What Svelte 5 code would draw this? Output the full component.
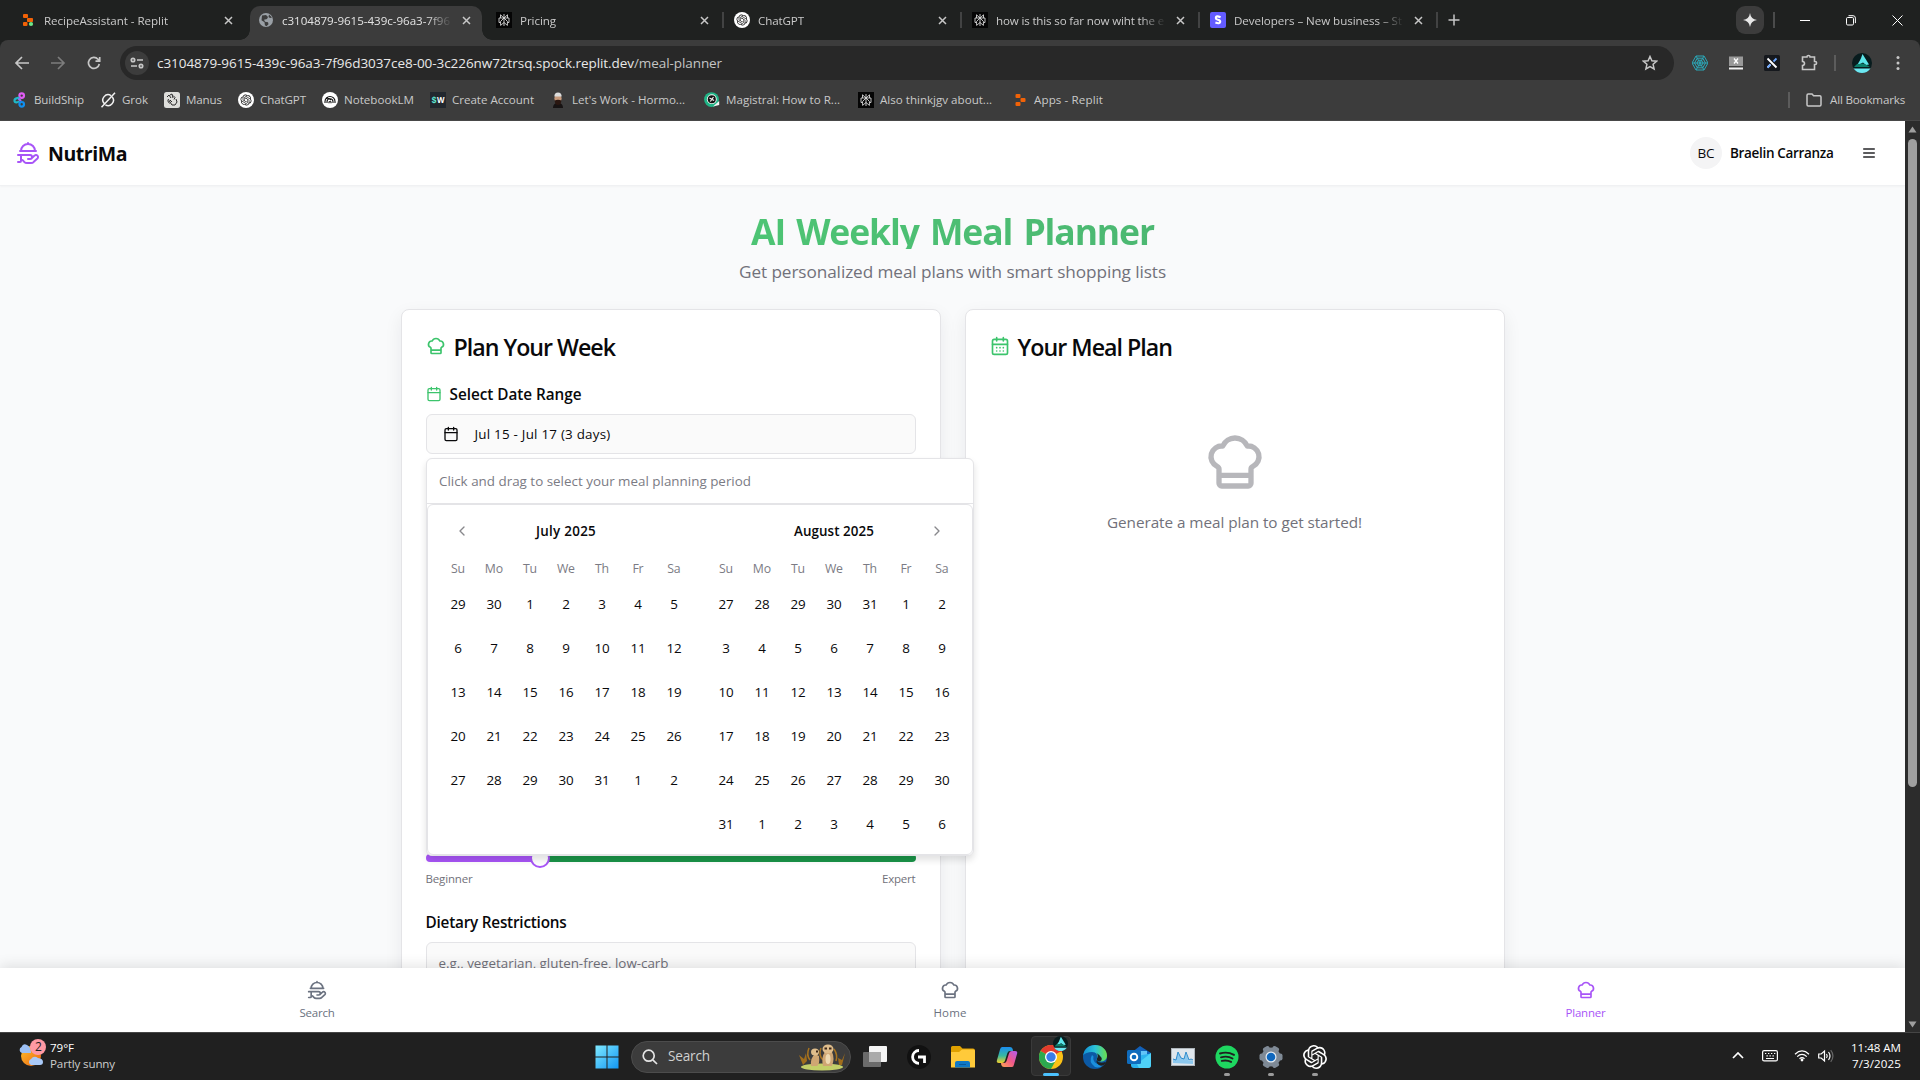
<script>
  function fit(node, width) {
    const range = document.createRange();
    range.selectNodeContents(node);
    const natural = range.getBoundingClientRect().width;
    const count = node.textContent.length;
    node.style.letterSpacing = (width - natural) / count + 'px';
  }

  const tabs = [
    { icon: 'replit', title: 'RecipeAssistant - Replit', w: 124 },
    { icon: 'globe', title: 'c3104879-9615-439c-96a3-7f96', w: 168, active: true },
    { icon: 'perplexity', title: 'Pricing', w: 36 },
    { icon: 'gpt', title: 'ChatGPT', w: 46 },
    { icon: 'perplexity', title: 'how is this so far now wiht the e', w: 168 },
    { icon: 'stripe', title: 'Developers – New business – St', w: 168 }
  ];

  const bookmarks = [
    { icon: 'buildship', title: 'BuildShip', w: 50 },
    { icon: 'grok', title: 'Grok', w: 26 },
    { icon: 'manus', title: 'Manus', w: 36 },
    { icon: 'gpt', title: 'ChatGPT', w: 46 },
    { icon: 'notebook', title: 'NotebookLM', w: 70 },
    { icon: 'sw', title: 'Create Account', w: 82 },
    { icon: 'person', title: "Let's Work - Hormo...", w: 113, box: 116 },
    { icon: 'magistral', title: 'Magistral: How to R...', w: 114, box: 116 },
    { icon: 'perplexity', title: 'Also thinkjgv about...', w: 112, box: 116 },
    { icon: 'apps', title: 'Apps - Replit', w: 69 }
  ];

  const span = (a, b) => Array.from({ length: b - a + 1 }, (_, i) => a + i);
  const weekdays = ['Su', 'Mo', 'Tu', 'We', 'Th', 'Fr', 'Sa'];
  const months = [
    { name: 'July 2025', w: 60, days: [29, 30, ...span(1, 31), 1, 2] },
    { name: 'August 2025', w: 80, days: [...span(27, 31), ...span(1, 31), ...span(1, 6)] }
  ];

  const nav = [
    { icon: 'platter', label: 'Search', w: 35 },
    { icon: 'chef', label: 'Home', w: 33 },
    { icon: 'chef', label: 'Planner', w: 40, active: true }
  ];

  const apps = ['taskview', 'logi', 'folder', 'copilot', 'chrome', 'edge', 'outlook', 'monitor', 'spotify', 'gear', 'openai'];
  const running = ['spotify', 'gear', 'openai'];
  const knot =
    'M22.28 9.82a5.98 5.98 0 0 0-.51-4.91 6.05 6.05 0 0 0-6.51-2.9A6.07 6.07 0 0 0 4.98 4.18a5.98 5.98 0 0 0-4 2.9 6.05 6.05 0 0 0 .74 7.1 5.98 5.98 0 0 0 .51 4.91 6.05 6.05 0 0 0 6.52 2.9A5.98 5.98 0 0 0 13.26 24a6.06 6.06 0 0 0 5.77-4.21 5.99 5.99 0 0 0 4-2.9 6.06 6.06 0 0 0-.75-7.07zm-9.02 12.61a4.48 4.48 0 0 1-2.88-1.04l.14-.08 4.78-2.76a.79.79 0 0 0 .39-.68v-6.74l2.02 1.17a.07.07 0 0 1 .04.05v5.58a4.5 4.5 0 0 1-4.49 4.5zM3.6 18.3a4.47 4.47 0 0 1-.53-3.01l.14.08 4.78 2.76a.77.77 0 0 0 .78 0l5.84-3.37v2.33a.08.08 0 0 1-.03.06L9.74 19.95A4.5 4.5 0 0 1 3.6 18.3zM2.34 7.9a4.49 4.49 0 0 1 2.37-1.98V11.6a.77.77 0 0 0 .39.68l5.81 3.35-2.02 1.17a.08.08 0 0 1-.07 0l-4.83-2.79A4.5 4.5 0 0 1 2.34 7.9zm16.6 3.85L13.1 8.36 15.12 7.2a.08.08 0 0 1 .07 0l4.83 2.79a4.49 4.49 0 0 1-.68 8.1v-5.67a.79.79 0 0 0-.4-.67zm2.01-3.02l-.14-.09-4.78-2.78a.78.78 0 0 0-.78 0L9.41 9.23V6.9a.07.07 0 0 1 .03-.06l4.83-2.79a4.5 4.5 0 0 1 6.68 4.68zM8.31 12.86l-2.02-1.16a.08.08 0 0 1-.04-.06V6.07a4.5 4.5 0 0 1 7.38-3.45l-.15.08L8.7 5.46a.79.79 0 0 0-.39.68zm1.1-2.37L12 9l2.61 1.5v3L12.01 15 9.4 13.5z';
</script>

{#snippet fav(name)}
  <svg class="fav" viewBox="0 0 16 16" width="16" height="16">
    {#if name === 'replit'}
      <g><rect x="3" y="2" width="5" height="4" rx="1" fill="#f26207" /><rect x="7" y="6" width="6" height="4" rx=".8" fill="#f26207" /><rect x="3" y="10" width="4.5" height="4" rx="1" fill="#f26207" /><circle cx="11" cy="12" r="2.100" fill="#6ee787" /></g>
    {:else if name === 'apps'}
      <g fill="#f26207"><rect x="3.500" y="2" width="5" height="4" rx="1" /><rect x="8.500" y="6" width="5" height="4" rx="1" /><rect x="3.500" y="10" width="5" height="4" rx="1" /></g>
    {:else if name === 'globe'}
      <circle cx="8" cy="8" r="7" fill="#9aa0a6" /><path d="M4 3.500 8 3l2 2-1 2-3 .8 1 2 3 .4.5 2-2 2-1.600-1-.4-3-3-2zM11 2.500l3 3-2 .6-1.500-1z" fill="#3c3c3c" />
    {:else if name === 'perplexity'}
      <rect width="16" height="16" fill="#050505" /><path d="M8 2v12M8 6 4.500 2.800V6M8 6l3.500-3.200V6M3 6h10v4.500h-1.600M3 6v4.500h1.600M8 6l-3.400 3.400v4L8 10.500M8 6l3.400 3.400v4L8 10.500" fill="none" stroke="#d8d8d8" stroke-width=".9" />
    {:else if name === 'gpt'}
      <circle cx="8" cy="8" r="8" fill="#fff" /><path d={knot} transform="translate(2.500 2.500) scale(.46)" fill="#111" />
    {:else if name === 'stripe'}
      <rect width="16" height="16" rx="2" fill="#635bff" /><path d="M10.600 5.200Q5.800 3.200 5.800 5.900 5.800 7 8 7.800q2.400.8 2.200 2.100-.3 2.300-4.800.7" fill="none" stroke="#fff" stroke-width="2.100" />
    {:else if name === 'buildship'}
      <g fill="none" stroke-width="2.200"><circle cx="9.700" cy="3.600" r="2.300" stroke="#e05cf5" /><path d="M7.500 5.400C5 6.500 2.500 6.200 2.500 8.400c0 2.500 3.500 2.600 4.500.5" stroke="#20b8c8" /><path d="M6.500 6.500 9 9" stroke="#9b6cf5" /><circle cx="9.700" cy="12.300" r="2.300" stroke="#0f8ff0" /></g>
    {:else if name === 'grok'}
      <path d="M4.200 11.600A5.300 5.300 0 0 1 11 3.600M12.300 5A5.300 5.300 0 0 1 5.400 12.800M15 .8 1.500 15.200" fill="none" stroke="#f1f1f1" stroke-width="1.500" />
    {:else if name === 'manus'}
      <rect width="16" height="16" rx="2.500" fill="#dededb" /><path d="M3 5l2-2 2 3M6 3l2-1 1 4M9 3.500l2 2-1 2M4 7l4 6h3l2-3-1-3M6 8l2 2M3.500 8.500l2 3" fill="none" stroke="#2b2b2b" stroke-width="1" />
    {:else if name === 'notebook'}
      <circle cx="8" cy="8" r="8" fill="#fff" /><path d="M3 11V9.500a5 5 0 0 1 10 0V11M5 11v-1.300a3 3 0 0 1 6 0V11M7 11.200V10a1.300 1.300 0 0 1 2 0v1.200M3.500 7.200Q6 5 9 8" fill="none" stroke="#111" stroke-width="1.100" />
    {:else if name === 'sw'}
      <rect width="16" height="16" fill="#22272e" /><text x="1.600" y="11.200" font-size="8.500" font-weight="700" fill="#5eead4" class="mono">$</text><text x="7" y="11" font-size="9" font-weight="700" fill="#fff" textLength="7.500" lengthAdjust="spacingAndGlyphs">W</text>
    {:else if name === 'person'}
      <path d="M3 16q0-5 5-5t5 5z" fill="#171313" /><circle cx="8" cy="6.500" r="3.600" fill="#c79a7c" /><path d="M4.300 4.600Q4.500.6 8 .6t3.700 4z" fill="#ddd" /><path d="M4.600 8.500q3.400-1.400 6.800 0l-.8 3.500q-2.600 2.200-5.200 0z" fill="#2a1711" />
    {:else if name === 'magistral'}
      <circle cx="7.500" cy="7.600" r="7.400" fill="#20b486" /><path d="M9 14.500 15.200 9v4z" fill="#f4f4f4" /><circle cx="7.800" cy="7.200" r="4.900" fill="#f3f3f3" /><circle cx="7.800" cy="7.200" r="4" fill="#111" /><path d="m5.500 6 4.600 2.500M9.500 5 6.300 9.500" stroke="#f3f3f3" stroke-width="1.200" />
    {/if}
  </svg>
{/snippet}

{#snippet lucide(name, size, sw = 2)}
  <svg class="lucide" width={size} height={size} viewBox="0 0 24 24" fill="none" stroke="currentColor" stroke-width={sw} stroke-linecap="round" stroke-linejoin="round">
    {#if name === 'platter'}
      <path d="M12 3V2M15.400 17.400l3.200-2.800a2 2 0 1 1 2.800 2.900l-3.600 3.300c-.7.8-1.700 1.200-2.800 1.200h-4c-1.100 0-2.100-.4-2.800-1.200l-1.300-1.460A1 1 0 0 0 6.150 19H5M2 14h12a2 2 0 0 1 0 4h-2M4 10h16M5 10a7 7 0 0 1 14 0M5 14v6a1 1 0 0 1-1 1H2" />
    {:else if name === 'chef'}
      <path d="M17 21a1 1 0 0 0 1-1v-5.350c0-.457.316-.844.727-1.041a4 4 0 0 0-2.134-7.589 5 5 0 0 0-9.186 0 4 4 0 0 0-2.134 7.588c.411.198.727.585.727 1.041V20a1 1 0 0 0 1 1ZM6 17h12" />
    {:else if name === 'calendar' || name === 'days'}
      <path d="M8 2v4M16 2v4M3 10h18" /><rect x="3" y="4" width="18" height="18" rx="2" />
      {#if name === 'days'}<path d="M8 14h.01M12 14h.01M16 14h.01M8 18h.01M12 18h.01M16 18h.01" />{/if}
    {:else if name === 'left'}<path d="m15 18-6-6 6-6" />
    {:else if name === 'right'}<path d="m9 18 6-6-6-6" />
    {:else if name === 'menu'}<path d="M4 6h16M4 12h16M4 18h16" />
    {/if}
  </svg>
{/snippet}

{#snippet app(name)}
  <svg viewBox="0 0 24 24" width="24" height="24">
    {#if name === 'taskview'}
      <rect x="6" y="1" width="18" height="16" rx="1" fill="#f5f5f5" /><rect x="0" y="7" width="18" height="15" rx="1" fill="#6b6b6b" /><rect x="6" y="7" width="12" height="10" fill="#aaa" />
    {:else if name === 'logi'}
      <circle cx="12" cy="12" r="12" fill="#111" /><path d="M12 5.500A6.400 6.400 0 0 0 12 18.300M11 12h6.500v6" fill="none" stroke="#fff" stroke-width="2.800" />
    {:else if name === 'folder'}
      <path d="M0 2.500Q0 1 1.500 1H9l2.500 2.500H22q2 0 2 2V12H0z" fill="#e0a100" /><path d="M0 7h8l3-2.500h11.500Q24 4.500 24 6v16.500H0z" fill="#ffca3a" /><path d="M4 22.500V18q0-2 2-2h11q2 0 2 2v4.500z" fill="#0f78c6" /><path d="M8 19.500h7" stroke="#0a5a9c" />
    {:else if name === 'copilot'}
      <path d="M7 2h8q2 0 2.700 2L18 6h-3q-2 0-2.600 2l-2.200 7q-.8 3-3.200 3H4q-3 0-2-3l3-10.500Q5.500 2 7 2z" fill="url(#cpA)" /><path d="M17 22H9q-2 0-2.700-2L6 18h3q2 0 2.600-2l2.200-7q.8-3 3.200-3h3q3 0 2 3l-3 10.500Q18.500 22 17 22z" fill="url(#cpB)" />
      <defs><linearGradient id="cpA" x1="0" y1="0" x2="0" y2="1"><stop stop-color="#1b8df0" /><stop offset=".55" stop-color="#38b9a0" /><stop offset="1" stop-color="#f5d028" /></linearGradient><linearGradient id="cpB" x1="1" y1="0" x2="0" y2="1"><stop stop-color="#b15cf0" /><stop offset=".5" stop-color="#f0588a" /><stop offset="1" stop-color="#ffa552" /></linearGradient></defs>
    {:else if name === 'chrome'}
      <circle cx="12" cy="12" r="12" fill="#fbc116" /><path d="M12 12 1.600 6A12 12 0 0 1 22.400 6z" fill="#e33b2e" /><path d="M12 12 1.600 6A12 12 0 0 0 12 24l5-9z" fill="#2da94f" /><path d="M12 6.500h10.700" stroke="#e33b2e" /><circle cx="12" cy="12" r="6" fill="#fff" /><circle cx="12" cy="12" r="4.700" fill="#3b7de9" />
    {:else if name === 'edge'}
      <circle cx="12" cy="12" r="12" fill="#0c59a4" /><path d="M.2 10.500C1 4 6 0 12 0c7 0 12 5 12 10.500 0 4-3 6-6.500 6-3 0-4.500-1.500-3.500-3 1.500-3-.5-6.500-5-6.500-4 0-7.500 1.500-8.800 3.500z" fill="url(#edA)" /><path d="M9 10q-4 7 3 12 5 1.500 9.500-3-4 1.500-8-.5-4-2.500-3-7z" fill="#1b8fdd" /><path d="M14 13.500q2-3.500-1-6 9 6 4 9-4 0-3-3z" fill="#202020" /><path d="M13.500 15.500q3.500 4 9.500 1.200-1.500 4-5 4-5-1.200-4.500-5.200z" fill="#202020" />
      <defs><linearGradient id="edA"><stop stop-color="#128fd3" /><stop offset=".5" stop-color="#2cc2d8" /><stop offset="1" stop-color="#6be04a" /></linearGradient></defs>
    {:else if name === 'outlook'}
      <path d="M4 8 13 1l11 7v6H4z" fill="#1260b8" /><path d="M7 6h13v10H7z" fill="#62c3f7" /><path d="M4 12 24 8.500V20q0 3-3 3H7q-3 0-3-3z" fill="#2bb3ee" /><path d="m24 8-14 11 2 4h9q3 0 3-3z" fill="#4fd2f8" /><rect x="0" y="5" width="14" height="14" rx="1.500" fill="#0f6cbd" /><circle cx="7" cy="12" r="3.300" fill="none" stroke="#fff" stroke-width="1.900" />
    {:else if name === 'monitor'}
      <rect x=".5" y="3.500" width="23" height="17" fill="#dfe6ec" stroke="#aeb5bb" /><path d="M2 18v-4l3 1 2-8 3 6 3 1 2-6 3 8 2-1 2 1v3z" fill="#8cc8ee" /><path d="m2 14 3 1 2-8 3 6 3 1 2-7 3 8 2-1 2 1" fill="none" stroke="#2d8bcc" stroke-width="1" />
    {:else if name === 'spotify'}
      <circle cx="12" cy="12" r="11.500" fill="#1ed760" /><path d="M5 8.500q7.500-2.200 14 1.400M6 12.300q6.500-1.800 11.500 1.200M6.800 15.900q5-1.300 9.300 1" fill="none" stroke="#202020" stroke-width="1.900" stroke-linecap="round" />
    {:else if name === 'gear'}
      <g fill="#7f8a96">{#each [0, 60, 120] as a}<rect x="8.500" y="0.500" width="7" height="23" rx="2" transform="rotate({a + 30} 12 12)" />{/each}<circle cx="12" cy="12" r="9.500" /></g><circle cx="12" cy="12" r="5.500" fill="#e7edf3" /><circle cx="12" cy="12" r="4.300" fill="#0f67bd" />
    {:else if name === 'openai'}
      <path d={knot} fill="#fff" />
    {/if}
  </svg>
{/snippet}

{#snippet sail(size)}
  <svg class="sail" width={size} height={size} viewBox="0 0 20 20"><circle cx="10" cy="10" r="10" fill="#081c1e" /><path d="M10.500 1 17 11.500l-3 .5-3-2.500L4 13q4-4 6.500-12z" fill="#5ce6ea" /><path d="M2 14q3-4 6-3 3-2 10 3z" fill="#0b7f6c" /><path d="M1.500 15.500h17Q15 20 10 20t-8.500-4.500z" fill="#6de8f2" /></svg>
{/snippet}

<div class="screen">
  <div class="tabstrip">
    {#each tabs as t}
      <div class="tab" class:active={t.active}>
        {@render fav(t.icon)}
        <div class="tab-title"><span use:fit={t.w}>{t.title}</span></div>
        <svg class="x" width="9" height="9" viewBox="0 0 9 9"><path d="m1 1 7 7M8 1 1 8" /></svg>
      </div>
    {/each}
    <svg class="plus" width="12" height="12" viewBox="0 0 12 12"><path d="M6 .5v11M.5 6h11" /></svg>
    <div class="window-tools">
      <div class="spark"><svg width="14" height="14" viewBox="0 0 14 14"><path d="M7 0Q7.800 6.200 14 7 7.800 7.800 7 14 6.200 7.800 0 7 6.200 6.200 7 0z" fill="#e8e8e8" /></svg></div>
      <i class="bar"></i>
      <svg width="10" height="11" viewBox="0 0 10 11"><path d="M0 5.500h10" /></svg>
      <svg width="10" height="11" viewBox="0 0 10 11"><rect x=".5" y="2.500" width="7" height="7.500" rx="1.200" /><path d="M2.500.700h4.500q2.400 0 2.400 2.400v5" /></svg>
      <svg width="11" height="11" viewBox="0 0 11 11"><path d="m.5.500 10 10M10.500.500l-10 10" /></svg>
    </div>
  </div>

  <div class="toolbar">
    <div class="arrows">
      <svg width="36" height="16" viewBox="-10 0 36 16"><path d="M15 8H2M8 2 2 8l6 6" /></svg>
      <svg class="off" width="36" height="16" viewBox="-10 0 36 16"><path d="M1 8h13M8 2l6 6-6 6" /></svg>
      <svg width="36" height="16" viewBox="-10 0 36 16"><path d="M13.300 9A5.500 5.500 0 1 1 12 4.200L13.500 6M13.700 2v4.200H9.500" /></svg>
    </div>
    <div class="omnibox">
      <div class="site"><svg width="14" height="12" viewBox="0 0 14 12"><circle cx="3" cy="3" r="1.700" /><path d="M7 3h6M1 9h6" /><circle cx="11" cy="9" r="1.700" /></svg></div>
      <div class="url"><span use:fit={477}>c3104879-9615-439c-96a3-7f96d3037ce8-00-3c226nw72trsq.spock.replit.dev</span><span class="path" use:fit={88}>/meal-planner</span></div>
      <svg class="star" width="16" height="16" viewBox="0 0 16 16"><path d="m8 1.500 1.900 4.300 4.700.4-3.500 3.100 1 4.600L8 11.500l-4.100 2.400 1-4.600-3.500-3.100 4.700-.4z" /></svg>
    </div>
    <div class="exts">
      <svg width="16" height="16" viewBox="0 0 16 16" stroke="#2ba8b8" fill="none"><path d="M4 1h8l4 7-4 7H4L0 8zM5.200 3.200h5.600L13.500 8l-2.700 4.800H5.200L2.500 8zM6.400 5.300h3.200L11 8l-1.400 2.700H6.400L5 8zM4 1l8 14M12 1 4 15M0 8h16" stroke-width="1" /></svg>
      <svg width="16" height="16" viewBox="0 0 16 16"><rect x="1" y="1.500" width="14" height="9.500" fill="#999" /><path d="m6 3.500 4 5M10 3.500l-4 5" stroke="#fff" stroke-width="1.300" /><path d="M1 13.500h14" stroke="#f2f2f2" stroke-width="2" /></svg>
      <svg width="16" height="16" viewBox="0 0 16 16"><rect width="16" height="16" rx="1.500" fill="#15181d" /><path d="m3.500 3.500 9 9M3.500 12.500 6.500 9.500" stroke="#fff" stroke-width="1.800" /><path d="m12.500 3.500-3 3M3.500 12.500l3-3" stroke="#6aa6ff" stroke-width="1.800" /></svg>
      <svg width="18" height="18" viewBox="0 0 18 18" fill="none" stroke="#c7c7c7" stroke-width="1.600"><path d="M2.500 3h4.500V2.500a1.500 1 0 0 1 3 0V3h4.500v4.500h.6a1.500 1.500 0 0 1 0 3h-.6V15.500h-12v-4q2-.2 2-2t-2-2z" /></svg>
    </div>
    <i class="bar tall"></i>
    {@render sail(20)}
    <svg class="dots" width="4" height="16" viewBox="0 0 4 16"><circle cx="2" cy="2.500" r="1.500" /><circle cx="2" cy="8" r="1.500" /><circle cx="2" cy="13.500" r="1.500" /></svg>
  </div>

  <div class="bookmarks">
    {#each bookmarks as b}
      <div class="bookmark">{@render fav(b.icon)}<div class="bm-label" style:width="{b.box ?? b.w}px"><span use:fit={b.w}>{b.title}</span></div></div>
    {/each}
    <div class="all"><i class="bar"></i><svg width="16" height="14" viewBox="0 0 16 14"><path d="M1 2.200Q1 1 2.200 1H6l1.600 1.800h6.200q1.200 0 1.200 1.200v7.800q0 1.200-1.200 1.200H2.200Q1 13 1 11.800z" fill="none" stroke="#c7c7c7" stroke-width="1.500" /></svg><span use:fit={75}>All Bookmarks</span></div>
  </div>

  <div class="viewport">
    <div class="page">
      <header>
        <div class="brand">{@render lucide('platter', 24)}</div>
        <b class="logo"><span use:fit={79}>NutriMa</span></b>
        <div class="avatar"><span use:fit={17}>BC</span></div>
        <div class="user"><span use:fit={103.500}>Braelin Carranza</span></div>
        <div class="menu">{@render lucide('menu', 16)}</div>
      </header>

      <main>
        <h1><span use:fit={403}>AI Weekly Meal Planner</span></h1>
        <p class="sub"><span use:fit={427}>Get personalized meal plans with smart shopping lists</span></p>
        <div class="cards">
          <section class="card">
            <h2>{@render lucide('chef', 20)}<span use:fit={161.500}>Plan Your Week</span></h2>
            <div class="label first">{@render lucide('calendar', 16)}<span use:fit={132}>Select Date Range</span></div>
            <div class="picker">
              <div class="date-button">{@render lucide('calendar', 16)}<span use:fit={136}>Jul 15 - Jul 17 (3 days)</span></div>
              <div class="popover">
                <div class="hint"><span use:fit={312}>Click and drag to select your meal planning period</span></div>
                <div class="calendar">
                  {#each months as m, i}
                    <div class="month">
                      <div class="caption" class:second={i === 1}>
                        <span class="name" use:fit={m.w}>{m.name}</span>
                        <span class="arrow">{@render lucide(i ? 'right' : 'left', 16)}</span>
                      </div>
                      <div class="grid week">{#each weekdays as d}<span>{d}</span>{/each}</div>
                      <div class="grid days">{#each m.days as d}<span>{d}</span>{/each}</div>
                    </div>
                  {/each}
                </div>
              </div>
            </div>
            <div class="slider"><div class="thumb"></div></div>
            <div class="ends"><span use:fit={47}>Beginner</span><span use:fit={33.500}>Expert</span></div>
            <div class="label diet"><span use:fit={141}>Dietary Restrictions</span></div>
            <div class="input"><span use:fit={230}>e.g., vegetarian, gluten-free, low-carb</span></div>
          </section>
          <section class="card">
            <h2>{@render lucide('days', 20)}<span use:fit={154.500}>Your Meal Plan</span></h2>
            <div class="empty">{@render lucide('chef', 64)}<p><span use:fit={255}>Generate a meal plan to get started!</span></p></div>
          </section>
        </div>
      </main>

      <nav>
        {#each nav as n}
          <div class="nav-item" class:on={n.active}>{@render lucide(n.icon, 20)}<span use:fit={n.w}>{n.label}</span></div>
        {/each}
      </nav>
    </div>
    <div class="scroll">
      <svg width="9" height="7" viewBox="0 0 9 7"><path d="M4.500.500 8.500 6.500h-8z" /></svg>
      <div class="scroll-thumb"></div>
      <svg class="down" width="9" height="7" viewBox="0 0 9 7"><path d="M4.500 6.500 8.500.500h-8z" /></svg>
    </div>
  </div>

  <div class="taskbar">
    <div class="weather">
      <svg width="28" height="28" viewBox="0 0 28 28"><defs><linearGradient id="sun" x1="0" y1="0" x2="1" y2="1"><stop stop-color="#fcc02e" /><stop offset="1" stop-color="#ee6510" /></linearGradient></defs><circle cx="13" cy="17" r="10" fill="url(#sun)" /><path d="M4 14a3.200 3.200 0 0 1-.5-6Q5 4 9 6q4 2 4 8z" fill="#9cc0f5" /><path d="M13 26a3.200 3.200 0 0 1 0-6q3-4 7-1 5 .5 5 4 0 3-3 3z" fill="#a9c9f8" /><circle cx="20" cy="8" r="8" fill="#ff99a4" /><text x="20.500" y="12.300" text-anchor="middle" font-size="12" fill="#222">2</text></svg>
      <div class="two"><span use:fit={24}>79°F</span><span class="dim" use:fit={65}>Partly sunny</span></div>
    </div>
    <div class="center">
      <div class="slot start"><svg width="24" height="24" viewBox="0 0 24 24"><defs><linearGradient id="win" x1="0" y1="0" x2="1" y2="1"><stop stop-color="#7fe9ff" /><stop offset="1" stop-color="#1297f5" /></linearGradient></defs><path d="M.5.500h11v11H.5zM12.500.500h11v11h-11zM.5 12.500h11v11H.5zM12.500 12.500h11v11h-11z" fill="url(#win)" /></svg></div>
      <div class="search">
        <svg width="16" height="16" viewBox="0 0 16 16"><circle cx="6.700" cy="6.700" r="5.500" /><path d="m10.800 10.800 4.200 4.200" /></svg>
        <span use:fit={42}>Search</span>
        <svg class="pets" width="50" height="28" viewBox="0 0 50 28"><ellipse cx="25" cy="24" rx="21" ry="3.500" fill="#c3cf68" /><path d="M6 22 2 12l5 4 2-6 1 8zM42 22l-1-7 4 2 3-7-3 12z" fill="#a06d1c" /><path d="M13 17Q9 12 12 5M26 17q-5-5-2-12M39 18q2-6-2-12" fill="none" stroke="#a9741f" stroke-width="1.500" /><path d="M14 23q-1-8 4-12l4 2q1 8-2 10zM26 23q-2-9 2-14h7q3 6 0 14z" fill="#cfa673" /><ellipse cx="18" cy="9" rx="4" ry="3.500" fill="#dfbd8b" /><ellipse cx="31" cy="6" rx="5.500" ry="4.500" fill="#dfbd8b" /><path d="M27.500 5.500h2.500M32 5.500h2.500M19 8.500h2" stroke="#3c2718" stroke-width="2" /><ellipse cx="31" cy="16" rx="2.500" ry="5" fill="#eed9b1" /></svg>
      </div>
      {#each apps as a}
        <div class="slot" class:current={a === 'chrome'}>
          {@render app(a)}
          {#if a === 'chrome'}<div class="badge">{@render sail(15)}</div>{/if}
          {#if a === 'chrome' || running.includes(a)}<i class="mark" class:wide={a === 'chrome'}></i>{/if}
        </div>
      {/each}
    </div>
    <div class="tray">
      <svg class="up" width="12" height="7" viewBox="0 0 12 7"><path d="m1 6 5-5 5 5" /></svg>
      <svg class="kb" width="16" height="12" viewBox="0 0 16 12"><rect x=".6" y=".6" width="14.800" height="10.300" rx="1.500" /><path d="M3 3.500h1.300M6 3.500h1.300M9 3.500h1.300M12 3.500h1.300M4.500 5.800h1.300M7.500 5.800h1.300M10.500 5.800h1.300M4 8.500h8" /></svg>
      <svg class="wifi" width="16" height="13" viewBox="0 0 16 13"><path d="M1 5.200q7-6.600 14 0M3.200 7.600q4.800-4.500 9.600 0M5.500 9.800q2.500-2.300 5 0" /><circle cx="8" cy="11" r="1.400" fill="#fff" stroke="none" /></svg>
      <svg class="vol" width="16" height="14" viewBox="0 0 16 14"><path d="M.7 5v4h2.500l3.300 3V2L3.200 5zM8.500 5q1.500 2 0 4M10.500 3q3 4 0 8" /><path d="M12.700 1.200q4.500 5.800 0 11.600" stroke="#666" /></svg>
      <div class="two right"><span use:fit={50}>11:48 AM</span><span use:fit={49}>7/3/2025</span></div>
    </div>
  </div>
</div>

<style>
  :global(body) { margin: 0; overflow: hidden; }
  .screen { width: 1920px; height: 1080px; display: flex; flex-direction: column; font-family: 'Open Sans', 'Noto Sans', sans-serif; overflow: hidden; background: #1f2120; }
  .screen :global(svg) { display: block; flex: none; }
  span { white-space: nowrap; }
  .mono { font-family: 'Liberation Mono', monospace; }
  .bar { width: 2px; height: 16px; background: #4a4b4b; flex: none; }

  .tabstrip { height: 40px; box-sizing: border-box; display: flex; align-items: center; padding-left: 9px; color: #c9c9c9; font-size: 11.600px; }
  .tab { width: 238px; height: 40px; box-sizing: border-box; padding: 0 14px 0 11px; display: flex; align-items: center; position: relative; }
  .tab:not(.active):nth-child(n + 3)::after { content: ''; position: absolute; right: -1px; top: 12px; width: 2px; height: 16px; background: #424343; }
  .tab.active { color: #e3e3e3; }
  .tab.active::before { content: ''; position: absolute; z-index: 0; left: 3px; right: 3px; top: 6px; bottom: 0; border-radius: 10px 10px 0 0; background: #3c3c3c; }
  .tab.active::after { content: ''; position: absolute; left: -7px; right: -7px; bottom: 0; height: 10px; background: radial-gradient(circle at 0 0, transparent 9.500px, #3c3c3c 10px) left / 10px 10px no-repeat, radial-gradient(circle at 100% 0, transparent 9.500px, #3c3c3c 10px) right / 10px 10px no-repeat; }
  .tab > :global(*) { position: relative; z-index: 1; }
  .tab-title { width: 170px; margin-left: 8px; overflow: hidden; height: 20px; line-height: 22px; mask-image: linear-gradient(90deg, #000 145px, transparent 170px); }
  .x { margin-left: auto; }
  .x path, .plus path { stroke: #c7c7c7; stroke-width: 1.500; fill: none; }
  .plus { margin-left: 11px; }
  .window-tools { margin-left: auto; display: flex; align-items: center; padding-right: 17px; }
  .window-tools svg path, .window-tools svg rect { stroke: #fff; fill: none; }
  .window-tools .spark { width: 28px; height: 28px; border-radius: 9px; background: #3c3c3c; display: grid; place-items: center; }
  .window-tools .spark svg path { fill: #e8e8e8; stroke: none; }
  .window-tools .bar { margin: 0 25px 0 9px; }
  .window-tools > svg { margin-right: 36px; }
  .window-tools > svg:last-child { margin-right: 0; }

  .toolbar { height: 46px; background: #3c3c3c; display: flex; align-items: center; padding-left: 4px; border-radius: 8px 8px 0 0; }
  .arrows { display: flex; width: 116px; }
  .arrows path, .site path, .site circle { fill: none; stroke: #c7c7c7; stroke-width: 1.700; }
  .arrows .off path { stroke: #7c7c7c; }
  .omnibox { width: 1554px; height: 34px; border-radius: 17px; background: #282828; display: flex; align-items: center; box-sizing: border-box; padding: 0 16px 0 5px; }
  .site { width: 24px; height: 24px; border-radius: 12px; background: #3c3c3c; display: grid; place-items: center; }
  .url { margin-left: 8px; font-size: 13.500px; color: #e8e8e8; display: flex; }
  .path { color: #c4c4c4; }
  .star { margin-left: auto; }
  .star path { fill: none; stroke: #c7c7c7; stroke-width: 1.500; }
  .exts { display: flex; gap: 20px; margin-left: 18px; align-items: center; width: 142px; }
  .bar.tall { background: #5c5c5c; }
  .toolbar :global(.sail) { margin-left: 16px; }
  .dots { margin-left: 24px; fill: #c7c7c7; }

  .bookmarks { height: 35px; box-sizing: border-box; padding: 0 15px 7px 12px; background: #3c3c3c; border-bottom: 1px solid #474747; display: flex; align-items: center; gap: 16px; color: #c9c9c9; font-size: 11.600px; }
  .bookmark, .all { display: flex; align-items: center; gap: 6px; }
  .bm-label { white-space: nowrap; }
  .all { margin-left: auto; gap: 8px; }
  .all .bar { background: #5c5c5c; margin-right: 8px; }

  .viewport { height: 911px; display: flex; }
  .page { width: 1905px; position: relative; overflow: hidden; background: #f9fafb; color: #09090b; }
  .scroll { width: 15px; background: #2c2c2c; display: flex; flex-direction: column; align-items: center; box-sizing: border-box; padding: 5px 0 4px; fill: #9f9f9f; }
  .scroll-thumb { width: 9px; height: 648px; border-radius: 5px; background: #9f9f9f; margin-top: 6px; }
  .down { margin-top: auto; }

  header { height: 65px; box-sizing: border-box; background: #fff; border-bottom: 1px solid #f0f1f3; box-shadow: 0 1px 2px rgba(0, 0, 0, 0.03); display: flex; align-items: center; padding: 0 28px 0 16px; }
  .brand, .on { color: #a855f7; }
  .logo { font-size: 19.500px; margin-left: 8px; }
  .avatar { width: 32px; height: 32px; border-radius: 16px; background: #f4f4f5; margin-left: auto; display: flex; align-items: center; justify-content: center; font-size: 13.500px; }
  .user { font-size: 13.500px; font-weight: 600; width: 104px; margin-left: 8px; }
  .menu { margin-left: 27px; color: #27272a; }

  main { width: 1104px; margin: 0 auto; padding-top: 23px; }
  h1 { margin: 0; height: 40px; line-height: 44px; font-size: 35.500px; font-weight: 700; word-spacing: 3px; text-align: center; color: transparent; background: linear-gradient(90deg, #4ade80 -60%, #4dc474 32%, #4cb872 68%); background-clip: text; -webkit-background-clip: text; }
  .sub { margin: 9px 0 0; height: 28px; line-height: 28px; font-size: 17.200px; text-align: center; color: #71717a; }
  .cards { margin-top: 23px; display: grid; grid-template-columns: 1fr 1fr; gap: 24px; }
  .card { height: 800px; box-sizing: border-box; border: 1px solid #e4e4e7; border-radius: 8px; background: #fff; padding: 21px 24px; box-shadow: 0 6px 18px rgba(15, 23, 42, 0.07); }
  h2 { margin: 0; height: 32px; display: flex; align-items: center; gap: 8px; font-size: 23.200px; font-weight: 600; line-height: 32px; }
  h2 :global(svg), .first :global(svg) { color: #3cc46c; }
  h2 :global(svg) { margin-bottom: 2px; }
  .label { font-size: 15.300px; font-weight: 600; display: flex; align-items: center; gap: 8px; height: 24px; line-height: 24px; }
  .first { margin-top: 19px; }
  .picker { position: relative; margin-top: 8px; }
  .date-button { height: 40px; box-sizing: border-box; border: 1px solid #e4e4e7; border-radius: 6px; background: #fafafa; display: flex; align-items: center; padding-left: 16px; gap: 16px; font-size: 13.400px; }
  .popover { position: absolute; z-index: 2; top: 44px; left: 0; width: 548px; height: 398px; box-sizing: border-box; border: 1px solid #e4e4e7; border-radius: 6px; background: #fff; box-shadow: 0 4px 7px rgba(0, 0, 0, 0.12); }
  .hint { height: 44px; border-bottom: 1px solid #e4e4e7; display: flex; align-items: center; padding-left: 12.500px; font-size: 13.400px; color: #7b7b84; }
  .calendar { display: flex; gap: 16px; height: 351px; box-sizing: border-box; border: 1px solid #e4e4e7; border-radius: 6px; padding: 12px 12px; }
  .month { width: 252px; }
  .caption { position: relative; height: 28px; display: flex; align-items: center; justify-content: center; font-size: 13.400px; font-weight: 600; padding-left: 1px; }
  .arrow { position: absolute; left: 14px; top: 6px; color: #88888c; }
  .second .arrow { left: auto; right: 15px; }
  .grid { display: grid; grid-template-columns: repeat(7, 36px); text-align: center; text-indent: 0.800px; }
  .week { height: 20px; line-height: 20px; margin-top: 14px; font-size: 12.300px; color: #7b7b84; letter-spacing: -0.2px; }
  .days { margin-top: 3px; grid-auto-rows: 44px; line-height: 44px; font-size: 13.400px; letter-spacing: -0.3px; }
  .slider { height: 8px; margin-top: 400px; border-radius: 4px; background: linear-gradient(90deg, #a855f7 114px, #1a9448 114px); position: relative; }
  .thumb { position: absolute; left: 104px; top: -6px; width: 20px; height: 20px; box-sizing: border-box; border: 2px solid #a855f7; border-radius: 10px; background: #fff; }
  .ends { display: flex; justify-content: space-between; margin-top: 9px; height: 16px; line-height: 16px; font-size: 11.500px; color: #71717a; }
  .diet { margin-top: 23px; }
  .input { margin-top: 8px; height: 80px; border: 1px solid #e4e4e7; border-radius: 6px; background: #fafafa; box-sizing: border-box; padding: 10px 12px; font-size: 13.400px; line-height: 20px; color: #71717a; }
  .empty { margin-top: 67px; display: flex; flex-direction: column; align-items: center; color: #71717a; }
  .empty :global(svg) { opacity: 0.5; }
  .empty p { margin: 16px 0 0; font-size: 15.300px; line-height: 24px; }

  nav { position: absolute; z-index: 3; left: 0; right: 0; bottom: 0; height: 64px; background: #fff; box-shadow: 0 -3px 12px rgba(0, 0, 0, 0.1); display: flex; justify-content: space-around; align-items: center; color: #6b7280; font-size: 11.500px; }
  .nav-item { display: flex; flex-direction: column; align-items: center; gap: 5px; line-height: 16px; }
  .nav-item.on { color: #a855f7; }

  .taskbar { height: 48px; box-sizing: border-box; background: #202020; border-top: 1px solid #454545; display: flex; align-items: center; color: #fff; }
  .weather { width: 567px; padding-left: 18px; display: flex; align-items: center; gap: 4px; }
  .weather svg { margin-bottom: 8px; }
  .two { display: flex; flex-direction: column; font-size: 11.600px; line-height: 16px; padding-bottom: 2px; }
  .dim { color: #ccc; }
  .center { display: flex; align-items: center; }
  .slot { width: 44px; height: 47px; display: flex; align-items: center; justify-content: center; position: relative; }
  .start { box-sizing: border-box; padding-right: 1px; }
  .current::before { content: ''; position: absolute; left: 2px; top: 3px; width: 38px; height: 38px; border: 1px solid #3a3a3a; border-radius: 4px; background: #2d2d2d; }
  .current > :global(svg) { position: relative; }
  .badge { position: absolute; right: 5px; top: 3px; }
  .mark { position: absolute; bottom: 4px; left: 19px; width: 6px; height: 3px; border-radius: 2px; background: #9b9b9b; }
  .mark.wide { left: 14px; width: 16px; background: #4cc2ff; }
  .search { width: 220px; height: 32px; box-sizing: border-box; border: 1px solid #4c4c4c; border-radius: 16px; background: #3c3c3c; margin: 0 2px; display: flex; align-items: center; padding: 0 3px 0 10px; font-size: 13.600px; color: #d0d0d0; }
  .search > svg:first-child { fill: none; stroke: #e4e4e4; stroke-width: 1.700; margin-right: 10px; }
  .search span { padding-bottom: 2px; }
  .pets { margin-left: auto; }
  .tray { margin-left: auto; display: flex; align-items: center; padding-right: 19px; fill: none; stroke: #fff; stroke-width: 1.200; }
  .tray > svg { margin-bottom: 2px; }
  .tray .two { stroke: none; }
  .up { margin-right: 18px; stroke-width: 1.700; }
  .kb { margin-right: 16px; }
  .wifi { margin-right: 8px; }
  .vol { margin-right: 17px; }
  .right { align-items: flex-end; }
</style>
